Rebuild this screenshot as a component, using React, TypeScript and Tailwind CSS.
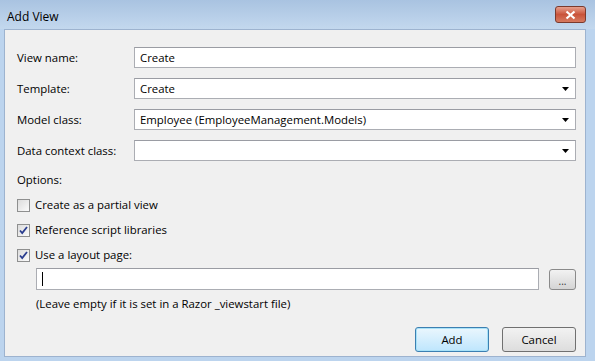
import React from 'react'

// Add View dialog, Windows 7 Aero style

function Combo({ value }: { value: string }) {
  return (
    <div className="flex h-[21px] flex-1 items-center justify-between border border-[#abadb3] border-t-[#9a9ca3] bg-white pl-[5px] pr-[6px]">
      <span>{value}</span>
      <svg width="7" height="4" viewBox="0 0 7 4">
        <path d="M0 0h7L3.5 4z" fill="#000" />
      </svg>
    </div>
  )
}

function Check({ checked, label }: { checked: boolean; label: string }) {
  return (
    <div className="flex items-center gap-[5px]">
      <div className="flex h-[13px] w-[13px] items-center justify-center border border-[#8e8f8f] bg-gradient-to-br from-[#dcdcdc] to-[#fbfbfb]">
        {checked && (
          <svg width="9" height="9" viewBox="0 0 9 9">
            <path d="M1 4.5l2.2 2.5L8 1" fill="none" stroke="#2a3d8f" strokeWidth="1.8" />
          </svg>
        )}
      </div>
      <span>{label}</span>
    </div>
  )
}

function Row({ label, children }: { label: string; children: React.ReactNode }) {
  return (
    <div className="flex items-center">
      <span className="w-[117px] shrink-0">{label}</span>
      {children}
    </div>
  )
}

export default function App() {
  return (
    <div
      className="flex h-[361px] w-[595px] flex-col overflow-hidden bg-[#bcd4ee] text-[11.4px] leading-[18px] text-black"
      style={{ fontFamily: '"Open Sans", "Noto Sans", sans-serif' }}
    >
      {/* title bar */}
      <div className="flex h-[29px] shrink-0 items-center justify-between bg-gradient-to-b from-[#a9c3e1] to-[#c3d8ee] pl-[7px] pr-[9px]">
        <span className="pt-[4px] text-[12px]">Add View</span>
        <div className="flex h-[17px] w-[31px] items-center justify-center rounded-[3px] border border-[#7b3a2d] bg-gradient-to-b from-[#e6a08e] via-[#c9533a] to-[#d67a60]">
          <svg width="11" height="10" viewBox="0 0 11 10">
            <path d="M1.5 1.5l8 7M9.5 1.5l-8 7" stroke="#fff" strokeWidth="2.2" />
          </svg>
        </div>
      </div>

      {/* client area */}
      <div className="mx-[4px] mb-[4px] mr-[9px] flex flex-1 flex-col border border-[#9db3cf] bg-[#f0f0f0] pl-[12px] pr-[9px] pt-[17px]">
        <div className="flex flex-col gap-[10px]">
          <Row label="View name:">
            <div className="flex h-[21px] flex-1 items-center border border-[#abadb3] border-t-[#9a9ca3] bg-white pl-[5px]">
              Create
            </div>
          </Row>
          <Row label="Template:">
            <Combo value="Create" />
          </Row>
          <Row label="Model class:">
            <Combo value="Employee (EmployeeManagement.Models)" />
          </Row>
          <Row label="Data context class:">
            <Combo value="" />
          </Row>
        </div>

        <div className="mt-[10px]">Options:</div>
        <div className="mt-[7px] flex flex-col gap-[7px]">
          <Check checked={false} label="Create as a partial view" />
          <Check checked label="Reference script libraries" />
          <Check checked label="Use a layout page:" />
        </div>

        <div className="mt-[4px] flex items-center pl-[19px]">
          <div className="flex h-[22px] flex-1 items-center border border-[#abadb3] border-t-[#9a9ca3] bg-white pl-[5px]">
            <div className="h-[14px] w-px bg-black" />
          </div>
          <div className="ml-[10px] flex h-[21px] w-[27px] items-end justify-center rounded-[3px] border border-[#8a8a8a] bg-gradient-to-b from-[#f2f2f2] to-[#d5d5d5] pb-[3px] text-[10px] leading-none text-[#333]">
            ...
          </div>
        </div>
        <div className="mt-[5px] pl-[19px]">(Leave empty if it is set in a Razor _viewstart file)</div>

        <div className="mt-auto mb-[4px] flex justify-end gap-[13px]">
          <div className="flex h-[25px] w-[74px] items-center justify-center rounded-[3px] border border-[#3c7fb1] bg-gradient-to-b from-[#eaf6fd] to-[#bee6fd] shadow-[inset_0_0_0_1px_#a8e2f8]">
            Add
          </div>
          <div className="flex h-[25px] w-[74px] items-center justify-center rounded-[3px] border border-[#707070] bg-gradient-to-b from-[#f2f2f2] to-[#dddddd]">
            Cancel
          </div>
        </div>
      </div>
    </div>
  )
}
